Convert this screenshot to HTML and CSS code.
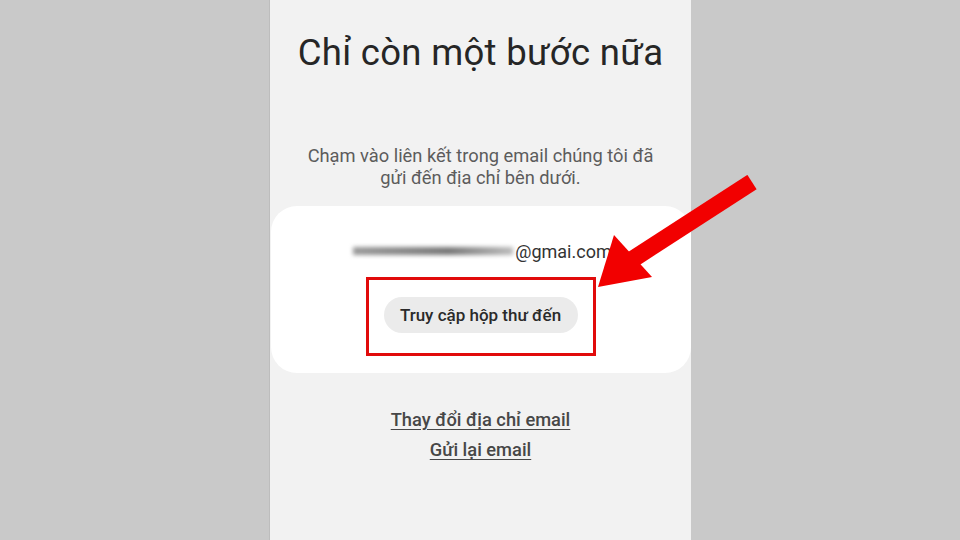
FILE: index.html
```html
<!DOCTYPE html>
<html lang="vi">
<head>
    <meta charset="UTF-8">
    <meta name="viewport" content="width=device-width, initial-scale=1.0">
    <title>Xác minh email</title>
    <link rel="stylesheet" href="styles.css">
</head>
<body>
    <div class="screen">
        <div class="phone">
            <!-- Tiêu đề -->
            <h1 class="title">Chỉ còn một bước nữa</h1>

            <p class="desc">Chạm vào liên kết trong email chúng tôi đã<br>gửi đến địa chỉ bên dưới.</p>

            <!-- Thẻ email -->
            <div class="card">
                <div class="email">
                    <span class="blur"></span><span class="domain">@gmai.com</span>
                </div>
                <div class="highlight">
                    <button class="inbox">Truy cập hộp thư đến</button>
                </div>
            </div>

            <div class="links">
                <a href="#" class="link">Thay đổi địa chỉ email</a>
                <a href="#" class="link">Gửi lại email</a>
            </div>
        </div>

        <!-- Mũi tên chỉ dẫn -->
        <svg class="arrow" width="170" height="120" viewBox="0 0 170 120">
            <line x1="162" y1="7" x2="40" y2="86" stroke="#f20000" stroke-width="17"/>
            <polygon points="8,112 24,60 62,102" fill="#f20000"/>
        </svg>
    </div>
</body>
</html>
```

FILE: styles.css
```css
body {
    margin: 0;
    font-family: Roboto, "Noto Sans", sans-serif;
    background-color: #c9c9c9;
}
.screen {
    position: relative;
    width: 960px;
    height: 540px;
    overflow: hidden;
    display: flex;
    justify-content: center;
}
.phone {
    width: 422px;
    height: 540px;
    background-color: #f2f2f2;
    border-left: 1px solid #bdbdbd;
    display: flex;
    flex-direction: column;
    align-items: center;
    box-sizing: border-box;
}
.title {
    margin: 31px 0 0;
    font-size: 36.5px;
    line-height: 43px;
    font-weight: 400;
    color: #262626;
    letter-spacing: 0.3px;
}
.desc {
    margin: 71px 0 0;
    font-size: 18.3px;
    line-height: 22px;
    color: #5c5c5c;
    text-align: center;
}
.card {
    margin-top: 17px;
    width: 420px;
    height: 167px;
    background-color: #fff;
    border-radius: 26px;
    display: flex;
    flex-direction: column;
    align-items: center;
}
.email {
    margin-top: 35px;
    height: 20px;
    display: flex;
    align-items: center;
    font-size: 18px;
    color: #333;
    margin-left: 4px;
}
.blur {
    display: inline-block;
    width: 160px;
    height: 8px;
    background: linear-gradient(90deg, #9a9a9a, #777 60%, #bbb);
    filter: blur(2px);
    margin-right: 2px;
}
.highlight {
    margin-top: 16px;
    border: 3px solid #e10b0b;
    padding: 17px 15px 20px;
}
.inbox {
    width: 194px;
    height: 36px;
    border: none;
    border-radius: 18px;
    background-color: #ebebeb;
    font-family: Roboto, "Noto Sans", sans-serif;
    font-size: 17px;
    font-weight: 500;
    color: #2a2a2a;
}
.links {
    margin-top: 36px;
    display: flex;
    flex-direction: column;
    align-items: center;
    gap: 9px;
}
.link {
    font-size: 18.3px;
    line-height: 21px;
    font-weight: 500;
    color: #474747;
    text-decoration: underline;
    text-underline-offset: 3px;
}
.arrow {
    position: absolute;
    left: 590px;
    top: 175px;
}
```
